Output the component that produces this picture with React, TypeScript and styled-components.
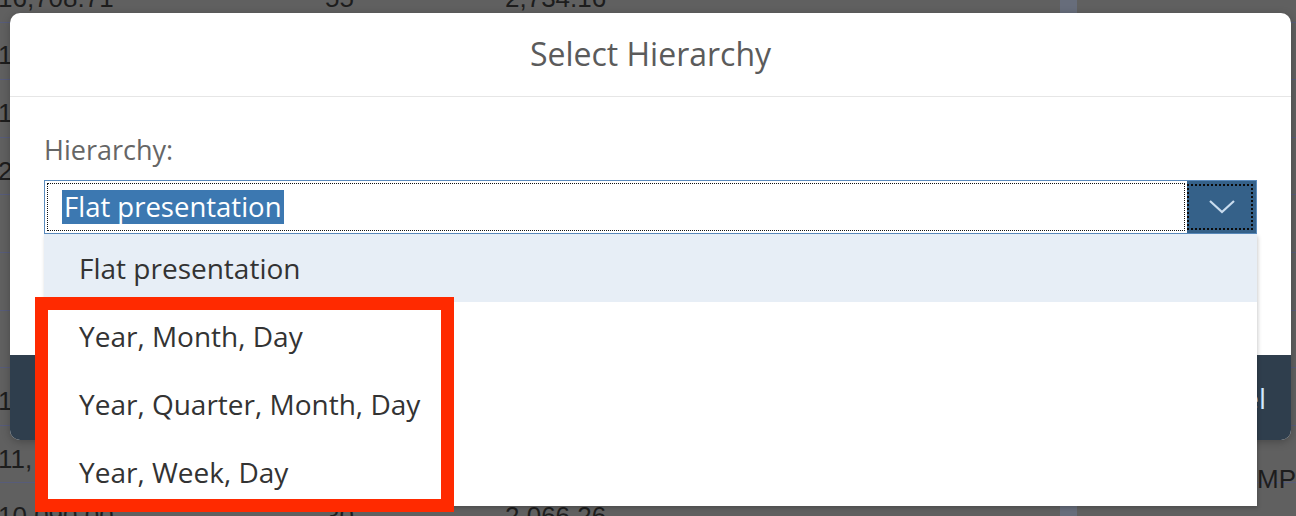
import React from "react";
import styled, { createGlobalStyle } from "styled-components";

const Global = createGlobalStyle`
  html, body { margin: 0; padding: 0; }
  body {
    width: 1296px;
    height: 516px;
    overflow: hidden;
    background: #606060;
    font-family: "Open Sans", "Noto Sans", sans-serif;
  }
`;

const Stage = styled.div`
  position: relative;
  width: 1296px;
  height: 516px;
  overflow: hidden;
  background: #606060;
`;

const Table = styled.div`
  display: flex;
  flex-direction: column;
  margin-top: -35px;
  margin-left: -2px;
`;

const Row = styled.div`
  display: grid;
  grid-template-columns: 327px 180px 555px 17px 1fr;
  height: 57.6px;
  box-sizing: border-box;
  border-bottom: 1px solid #575c7a;
  align-items: center;
  padding-top: 10px;
  font: 26px "Liberation Sans", Arial, sans-serif;
  color: #1d1d1d;
`;

const Cell = styled.div<{ $drop?: number }>`
  white-space: nowrap;
  overflow: hidden;
  margin-top: ${(p) => (p.$drop ? `${p.$drop}px` : "0")};
`;

const SideCell = styled(Cell)`
  padding-left: 180px;
`;

const Band = styled.div`
  align-self: stretch;
  margin-top: -10px;
  background: #676d7b;
`;

const Dialog = styled.div`
  position: absolute;
  left: 10px;
  top: 13px;
  width: 1281px;
  height: 427px;
  display: flex;
  flex-direction: column;
  border-radius: 10px;
  background: #ffffff;
  box-shadow: 0 2px 8px rgba(0, 0, 0, 0.25);
`;

const Header = styled.div`
  height: 84px;
  box-sizing: border-box;
  border-bottom: 1px solid #e6e6e6;
  display: flex;
  align-items: center;
  justify-content: center;
  font-size: 32px;
  color: #5b5b5b;
  padding-bottom: 2px;
`;

const Body = styled.div`
  flex: 1;
  padding: 34px 34px 0;
  display: flex;
  flex-direction: column;
`;

const Label = styled.div`
  font-size: 27px;
  line-height: 38px;
  color: #666666;
  margin-bottom: 11px;
`;

const SelectWrap = styled.div`
  position: relative;
  width: 1213px;
`;

const SelectBox = styled.div`
  height: 54px;
  box-sizing: border-box;
  border: 1px solid #5a8bbd;
  display: flex;
  background: #ffffff;
`;

const Field = styled.div`
  flex: 1;
  margin: 2px;
  border: 1px dotted #111;
  display: flex;
  align-items: center;
  padding-left: 14px;
`;

const Selected = styled.span`
  background: #3c78b1;
  color: #ffffff;
  font-size: 27.5px;
  line-height: 34px;
  padding: 0 2px;
`;

const ArrowButton = styled.div`
  width: 69px;
  background: #356189;
  display: flex;
  align-items: center;
  justify-content: center;
  position: relative;
  &::after {
    content: "";
    position: absolute;
    inset: 3px 3px 3px 0;
    border: 2px dotted #0b0b0b;
  }
`;

const List = styled.div`
  position: absolute;
  top: 100%;
  left: 0;
  right: 0;
  background: #ffffff;
  box-shadow: 1px 2px 4px rgba(0, 0, 0, 0.2);
  display: flex;
  flex-direction: column;
  z-index: 2;
`;

const Item = styled.div<{ $active?: boolean }>`
  height: 68px;
  display: flex;
  align-items: center;
  padding-left: 35px;
  font-size: 28px;
  color: #333333;
  background: ${(p) => (p.$active ? "#e7eef6" : "#ffffff")};
`;

const Footer = styled.div`
  height: 85px;
  background: #2f3e4d;
  border-radius: 0 0 10px 10px;
  display: flex;
  align-items: center;
  justify-content: flex-end;
  gap: 40px;
  padding-right: 25px;
`;

const FooterButton = styled.div`
  font-size: 28px;
  color: #d4e9ff;
`;

const Highlight = styled.div`
  position: absolute;
  left: 35px;
  top: 297px;
  width: 419px;
  height: 215px;
  box-sizing: border-box;
  border: 13px solid #ff2a00;
  z-index: 3;
`;

const rows: [string, string, string, string][] = [
  ["16,708.71", "55", "2,734.16", ""],
  ["18,412.50", "61", "3,017.42", ""],
  ["14,930.20", "48", "2,511.09", ""],
  ["21,306.44", "72", "3,402.77", ""],
  ["", "", "", ""],
  ["", "", "", ""],
  ["", "", "", ""],
  ["15,285.93", "50", "2,602.31", ""],
  ["11, 174.06", "39", "1,948.55", "MPC"],
  ["10,090.00", "30", "2,066.26", ""],
];

export default function App() {
  return (
    <Stage>
      <Global />
      <Table>
        {rows.map((r, i) => (
          <Row key={i}>
            <Cell>{r[0]}</Cell>
            <Cell>{r[1]}</Cell>
            <Cell>{r[2]}</Cell>
            <Band />
            <SideCell $drop={r[3] ? 40 : 0}>{r[3]}</SideCell>
          </Row>
        ))}
      </Table>
      <Dialog>
        <Header>Select Hierarchy</Header>
        <Body>
          <Label>Hierarchy:</Label>
          <SelectWrap>
            <SelectBox>
              <Field>
                <Selected>Flat presentation</Selected>
              </Field>
              <ArrowButton>
                <svg width="28" height="16" viewBox="0 0 28 16">
                  <path d="M2 2 L14 13 L26 2" fill="none" stroke="#c9dcee" strokeWidth="2.2" />
                </svg>
              </ArrowButton>
            </SelectBox>
            <List>
              <Item $active>Flat presentation</Item>
              <Item>Year, Month, Day</Item>
              <Item>Year, Quarter, Month, Day</Item>
              <Item>Year, Week, Day</Item>
            </List>
          </SelectWrap>
        </Body>
        <Footer>
          <FooterButton>OK</FooterButton>
          <FooterButton>Cancel</FooterButton>
        </Footer>
      </Dialog>
      <Highlight />
    </Stage>
  );
}
